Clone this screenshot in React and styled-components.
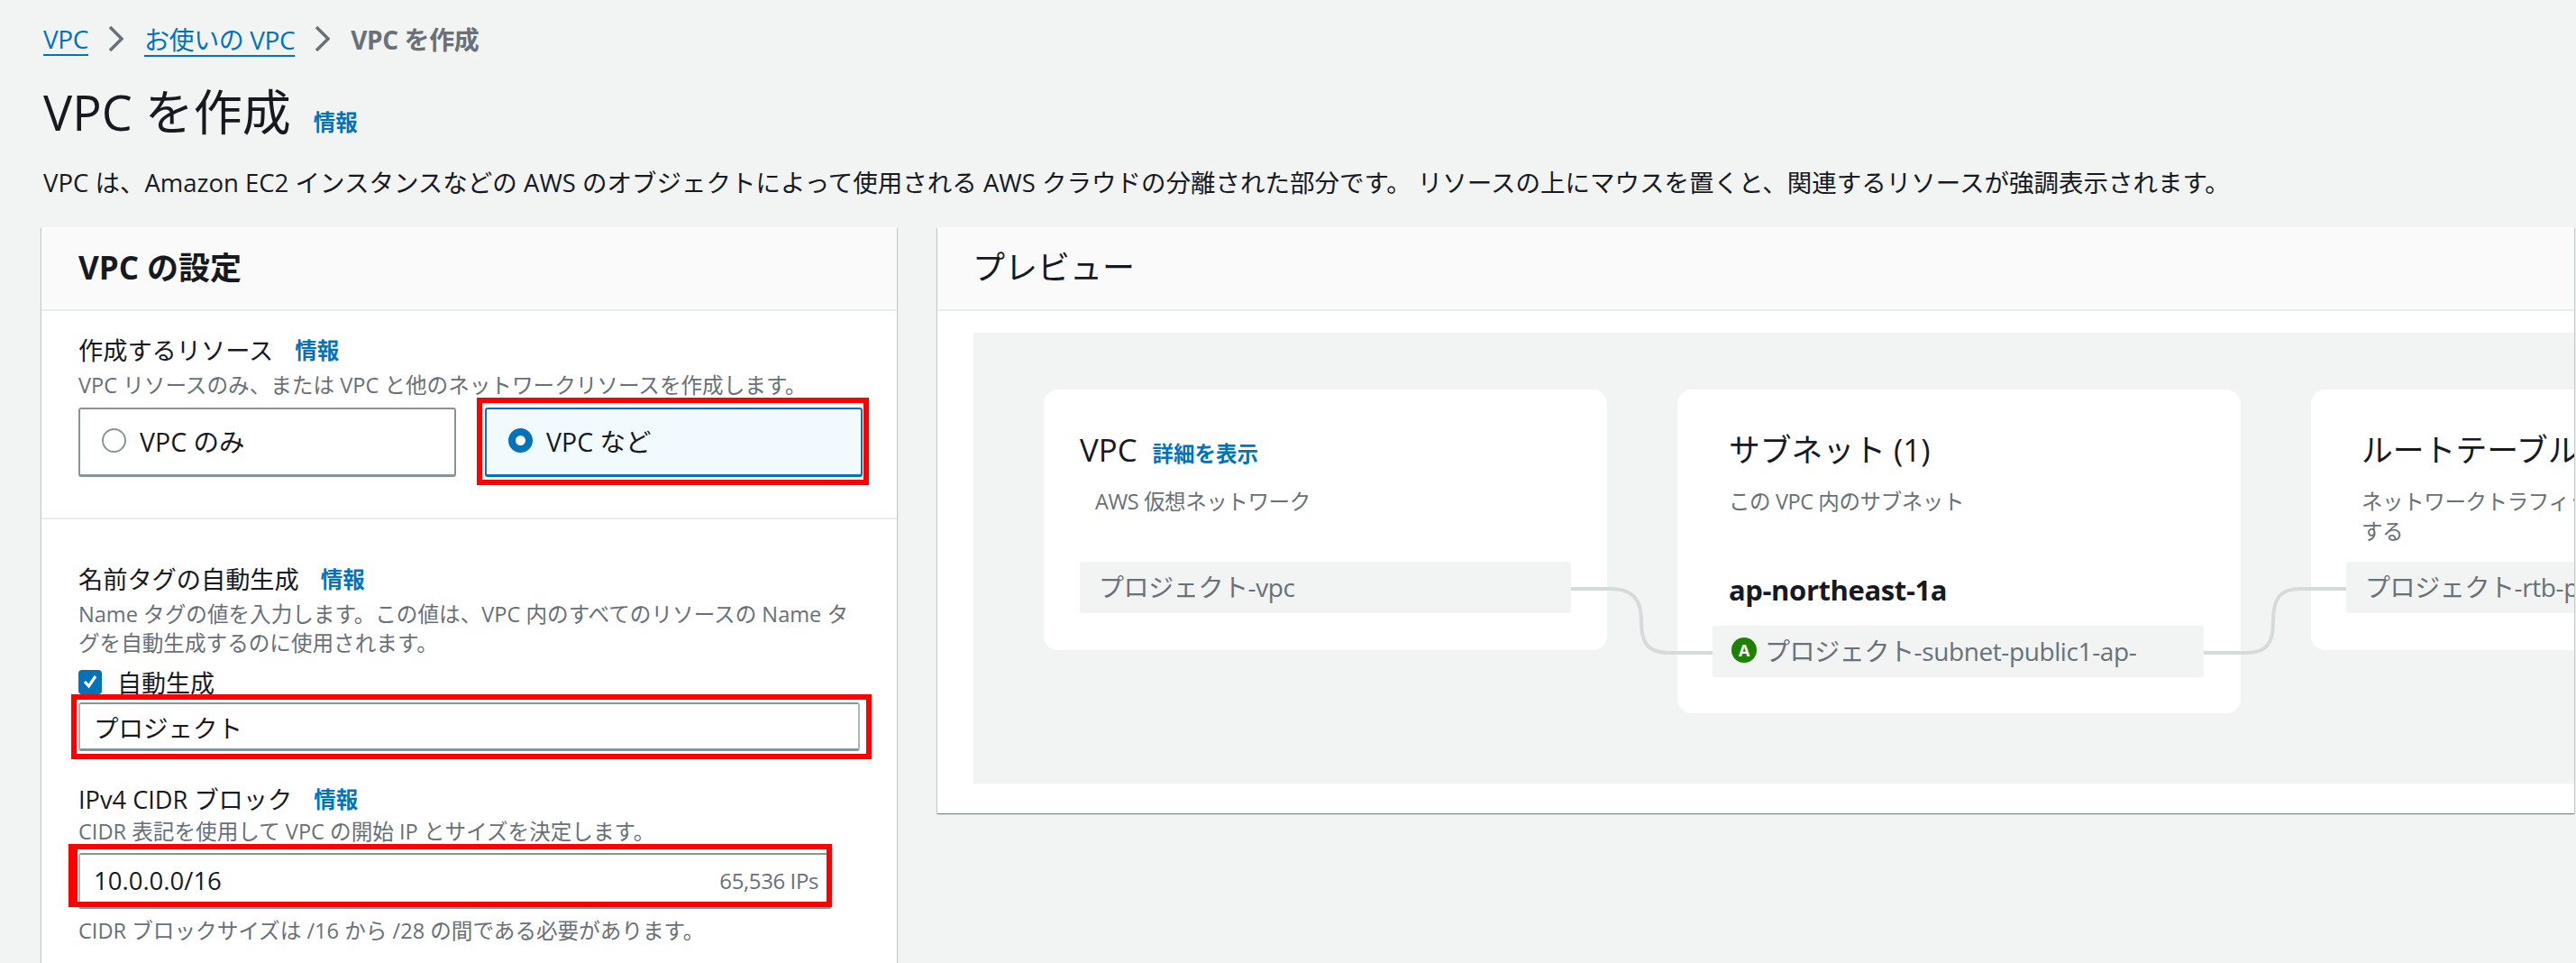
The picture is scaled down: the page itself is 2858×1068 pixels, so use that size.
import React from 'react';
import styled, { createGlobalStyle } from 'styled-components';

const ink = '#16191f';
const grey = '#687078';
const blue = '#0073bb';
const red = '#ff0000';

const GlobalStyle = createGlobalStyle`
  html, body {
    margin: 0;
    padding: 0;
    background: #f2f3f3;
  }
  body {
    font-family: "Open Sans", "Noto Sans CJK JP", sans-serif;
    color: ${ink};
  }
  * {
    box-sizing: border-box;
  }
`;

const Page = styled.div`
  width: 2858px;
  height: 1068px;
  padding-left: 46px;
  overflow: hidden;
`;

const Crumbs = styled.nav`
  display: flex;
  align-items: center;
  height: 78px;
  padding: 8px 0 0 2px;
  font-size: 28px;
  letter-spacing: -0.4px;
`;

const CrumbLink = styled.a`
  color: ${blue};
  text-decoration: underline;
  text-decoration-thickness: 2px;
  text-underline-offset: 6px;
`;

const CrumbCurrent = styled.span`
  color: ${grey};
  font-weight: 700;
`;

const Chevron = styled.svg`
  width: 17px;
  height: 28px;
  margin: 0 23px 0 22px;
  fill: none;
  stroke: ${grey};
  stroke-width: 3.5;
`;

const TitleRow = styled.div`
  display: flex;
  align-items: baseline;
  gap: 25px;
  height: 92px;
  padding: 10px 0 0 2px;
`;

const Title = styled.h1`
  margin: 0;
  font-size: 54px;
  line-height: 72px;
  font-weight: 400;
`;

const Info = styled.a`
  color: ${blue};
  font-size: 24.5px;
  font-weight: 700;
`;

const Lead = styled.p`
  margin: 0;
  height: 82px;
  padding: 11px 0 0 2px;
  font-size: 27.5px;
  line-height: 44px;
  white-space: nowrap;
`;

const Columns = styled.div`
  display: flex;
  align-items: flex-start;
  gap: 45px;
`;

const Panel = styled.section`
  flex: none;
  width: ${p => p.$width}px;
  background: #fff;
  box-shadow: 0 1px 1px rgba(0, 28, 36, 0.3), 1px 1px 1px rgba(0, 28, 36, 0.15), -1px 1px 1px rgba(0, 28, 36, 0.15);
`;

const PanelHeader = styled.header`
  display: flex;
  align-items: center;
  height: 93px;
  padding: 0 0 6px ${p => p.$inset}px;
  background: #fafafa;
  border-bottom: 2px solid #eaeded;
  font-size: ${p => p.$size}px;
  font-weight: ${p => p.$weight};
`;

const Section = styled.div`
  height: ${p => p.$height}px;
  padding: ${p => p.$top}px 0 0 41px;
  border-bottom: ${p => (p.$divided ? '2px solid #eaeded' : 'none')};
`;

const LabelRow = styled.div`
  display: flex;
  align-items: center;
  gap: 24px;
  height: 36px;
  margin-top: ${p => p.$top || 0}px;
  font-size: 27.2px;
`;

const Hint = styled.p`
  margin: ${p => p.$top}px 0 0;
  width: 870px;
  font-size: 23.6px;
  line-height: 32px;
  color: ${grey};
`;

const Tiles = styled.div`
  display: flex;
  gap: 32px;
  margin-top: 9px;
`;

const Annotated = styled.div`
  position: relative;
  flex: none;
  width: fit-content;
  margin-top: ${p => p.$top || 0}px;
`;

const RedBox = styled.span`
  position: absolute;
  top: ${p => p.$t}px;
  left: ${p => p.$l}px;
  right: ${p => p.$r}px;
  bottom: ${p => p.$b}px;
  border: 6px solid ${red};
  border-left-width: ${p => p.$thick || 6}px;
  pointer-events: none;
`;

const Tile = styled.div`
  display: flex;
  align-items: center;
  gap: 15px;
  width: 419px;
  height: 77px;
  padding: 0 0 3px 24px;
  border: 2px solid ${p => (p.$selected ? blue : '#879596')};
  border-bottom-width: 3px;
  border-radius: 3px;
  background: ${p => (p.$selected ? '#f1faff' : '#fff')};
  font-size: 28.5px;
`;

const Radio = styled.span`
  flex: none;
  width: 27px;
  height: 27px;
  border-radius: 50%;
  border: ${p => (p.$checked ? `8px solid ${blue}` : '2px solid #879596')};
  background: #fff;
`;

const CheckRow = styled.div`
  display: flex;
  align-items: center;
  gap: 17px;
  height: 30px;
  margin-top: 12px;
  font-size: 27px;
`;

const CheckBox = styled.span`
  display: flex;
  align-items: center;
  justify-content: center;
  width: 26px;
  height: 27px;
  border-radius: 4px;
  background: ${blue};
`;

const Field = styled.div`
  display: flex;
  align-items: center;
  justify-content: space-between;
  width: ${p => p.$width}px;
  height: ${p => p.$height}px;
  padding: 0 13px 0 15px;
  background: #fff;
  border: 2px solid #aab7b8;
  border-top-color: #879596;
  border-bottom: 3px solid #879596;
  border-radius: 3px;
  font-size: 27.5px;
`;

const Suffix = styled.span`
  color: ${grey};
  font-size: 24px;
  letter-spacing: -0.4px;
`;

const Diagram = styled.div`
  position: relative;
  display: flex;
  align-items: flex-start;
  gap: 78px;
  height: 500px;
  margin: 24px 0 33px 40px;
  padding: 63px 0 0 78px;
  background: #f2f3f3;
  overflow: hidden;
`;

const Links = styled.svg`
  position: absolute;
  top: 0;
  left: 0;
  width: 1776px;
  height: 500px;
  fill: none;
  stroke: #d5dbdb;
  stroke-width: 4;
`;

const Card = styled.div`
  flex: none;
  width: 625px;
  height: ${p => p.$height}px;
  padding: 43px 10px 0 ${p => p.$inset}px;
  background: #fff;
  border-radius: 16px;
`;

const CardTitle = styled.div`
  display: flex;
  align-items: baseline;
  gap: 17px;
  height: 48px;
  font-size: 34.8px;
  line-height: 48px;
  white-space: nowrap;
`;

const CardLink = styled.a`
  color: ${blue};
  font-size: 23.5px;
  font-weight: 700;
`;

const CardText = styled.p`
  margin: 17px 0 0;
  padding-left: ${p => p.$inset || 0}px;
  font-size: 23.5px;
  line-height: 33px;
  color: ${grey};
  letter-spacing: -0.4px;
`;

const Zone = styled.div`
  height: 60px;
  margin-top: 61px;
  font-size: 31px;
  font-weight: 700;
  line-height: 40px;
  letter-spacing: -0.4px;
  white-space: nowrap;
`;

const Res = styled.div`
  display: flex;
  align-items: center;
  gap: 9px;
  width: 545px;
  height: 57px;
  margin: ${p => p.$top}px 0 0 ${p => p.$shift || 0}px;
  padding: 0 0 3px 21px;
  background: #f2f3f3;
  border-radius: 3px;
  color: ${grey};
  font-size: 28px;
  letter-spacing: -0.4px;
  white-space: nowrap;
  overflow: hidden;
`;

const Badge = styled.span`
  flex: none;
  display: flex;
  align-items: center;
  justify-content: center;
  width: 28px;
  height: 28px;
  border-radius: 50%;
  background: #1d8102;
  color: #fff;
  font-size: 18px;
  font-weight: 700;
`;

function Crumb() {
  return (
    <Chevron viewBox="0 0 17 28">
      <path d="M2 1 L15 14 L2 27" />
    </Chevron>
  );
}

export default function App() {
  return (
    <Page>
      <GlobalStyle />
      <Crumbs>
        <CrumbLink>VPC</CrumbLink>
        <Crumb />
        <CrumbLink>お使いの VPC</CrumbLink>
        <Crumb />
        <CrumbCurrent>VPC を作成</CrumbCurrent>
      </Crumbs>
      <TitleRow>
        <Title>VPC を作成</Title>
        <Info>情報</Info>
      </TitleRow>
      <Lead>VPC は、Amazon EC2 インスタンスなどの AWS のオブジェクトによって使用される AWS クラウドの分離された部分です。 リソースの上にマウスを置くと、関連するリソースが強調表示されます。</Lead>
      <Columns>
        <Panel $width={949}>
          <PanelHeader $inset={41} $size={35} $weight={700}>VPC の設定</PanelHeader>
          <Section $divided $height={231} $top={24}>
            <LabelRow>作成するリソース <Info>情報</Info></LabelRow>
            <Hint $top={6}>VPC リソースのみ、または VPC と他のネットワークリソースを作成します。</Hint>
            <Tiles>
              <Tile><Radio />VPC のみ</Tile>
              <Annotated>
                <Tile $selected><Radio $checked />VPC など</Tile>
                <RedBox $t={-11} $l={-9} $r={-7} $b={-9} />
              </Annotated>
            </Tiles>
          </Section>
          <Section $height={600} $top={47}>
            <LabelRow>名前タグの自動生成 <Info>情報</Info></LabelRow>
            <Hint $top={6}>Name タグの値を入力します。この値は、VPC 内のすべてのリソースの Name タグを自動生成するのに使用されます。</Hint>
            <CheckRow>
              <CheckBox>
                <svg width="18" height="18" viewBox="0 0 18 18" fill="none" stroke="#fff" strokeWidth="3.2">
                  <path d="M3 9 L7.5 14 L15 3" />
                </svg>
              </CheckBox>
              自動生成
            </CheckRow>
            <Annotated $top={8}>
              <Field $width={867} $height={54}>プロジェクト</Field>
              <RedBox $t={-9} $l={-8} $r={-13} $b={-9} />
            </Annotated>
            <LabelRow $top={34}>IPv4 CIDR ブロック <Info>情報</Info></LabelRow>
            <Hint $top={3}>CIDR 表記を使用して VPC の開始 IP とサイズを決定します。</Hint>
            <Annotated $top={8}>
              <Field $width={836} $height={62}>
                10.0.0.0/16
                <Suffix>65,536 IPs</Suffix>
              </Field>
              <RedBox $t={-10} $l={-11} $r={0} $b={2} $thick={10} />
            </Annotated>
            <Hint $top={8}>CIDR ブロックサイズは /16 から /28 の間である必要があります。</Hint>
          </Section>
        </Panel>
        <Panel $width={1816}>
          <PanelHeader $inset={39} $size={36} $weight={400}>プレビュー</PanelHeader>
          <Diagram>
            <Card $height={289} $inset={40}>
              <CardTitle>VPC <CardLink>詳細を表示</CardLink></CardTitle>
              <CardText $inset={17}>AWS 仮想ネットワーク</CardText>
              <Res $top={50}>プロジェクト-vpc</Res>
            </Card>
            <Card $height={359} $inset={57}>
              <CardTitle>サブネット (1)</CardTitle>
              <CardText>この VPC 内のサブネット</CardText>
              <Zone>ap-northeast-1a</Zone>
              <Res $top={0} $shift={-18}><Badge>A</Badge>プロジェクト-subnet-public1-ap-</Res>
            </Card>
            <Card $height={289} $inset={56}>
              <CardTitle>ルートテーブル (1)</CardTitle>
              <CardText>ネットワークトラフィックをリソースにルーティングする</CardText>
              <Res $top={17} $shift={-17}>プロジェクト-rtb-public</Res>
            </Card>
            <Links viewBox="0 0 1776 500">
              <path d="M663 284 H706 C735 284 741 300 741 320 C741 340 745 355 772 355 H820" />
              <path d="M1365 355 H1412 C1438 355 1442 340 1442 320 C1442 300 1446 284 1472 284 H1523" />
            </Links>
          </Diagram>
        </Panel>
      </Columns>
    </Page>
  );
}
